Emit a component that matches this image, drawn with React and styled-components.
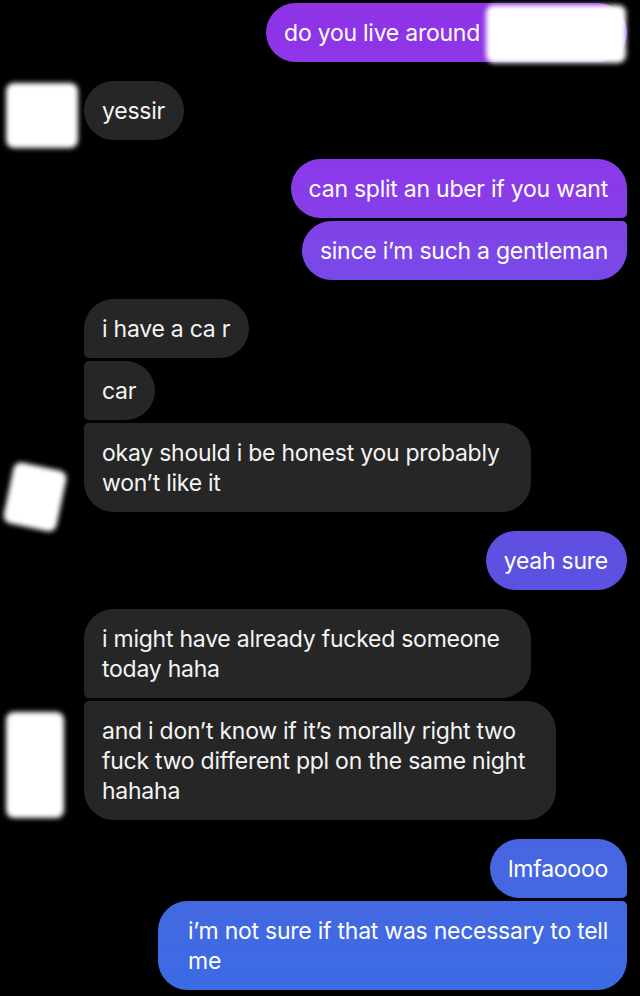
import React from 'react';
import styled, { createGlobalStyle, css } from 'styled-components';

const Global = createGlobalStyle`
  html, body {
    margin: 0;
    background: #000;
  }
  body {
    font-family: Inter, "Noto Sans", "DejaVu Sans", sans-serif;
    -webkit-font-smoothing: antialiased;
  }
`;

const Thread = styled.div`
  display: flex;
  flex-direction: column;
  gap: 19px;
  padding: 3px 13px 0 0;
  min-height: 996px;
  box-sizing: border-box;
  background: #000;
`;

const OutGroup = styled.div`
  display: flex;
  flex-direction: column;
  align-items: flex-end;
  gap: 3px;
`;

const InGroup = styled.div`
  display: flex;
  align-items: flex-end;
`;

const Gutter = styled.div`
  width: 84px;
  flex-shrink: 0;
  display: flex;
  align-items: flex-end;
`;

const InStack = styled.div`
  display: flex;
  flex-direction: column;
  align-items: flex-start;
  gap: 3px;
`;

const BIG = 29.5;
const SMALL = 5;

const cornersFor = (side, pos) => {
  const first = pos === 'first' || pos === 'single';
  const last = pos === 'last' || pos === 'single';
  const top = first ? BIG : SMALL;
  const bottom = last ? BIG : SMALL;
  if (side === 'out') {
    return css`border-radius: ${BIG}px ${top}px ${bottom}px ${BIG}px;`;
  }
  return css`border-radius: ${top}px ${BIG}px ${BIG}px ${bottom}px;`;
};

// wrapped bubbles are a little wider than their longest line
const paddingFor = ({ $side, $multi, $padRight }) => {
  const extra = $multi ? 12 : 0;
  const left = 18 + ($side === 'out' ? extra : 0);
  const right = $padRight || 19 + ($side === 'in' ? extra : 0);
  return css`padding: 14.5px ${right}px 14.5px ${left}px;`;
};

const Bubble = styled.div`
  position: relative;
  box-sizing: border-box;
  max-width: 500px;
  ${paddingFor}
  font-size: 23px;
  line-height: 30px;
  color: #fff;
  letter-spacing: -0.25px;
  white-space: pre-line;
  ${p => cornersFor(p.$side, p.$pos)}
  ${p => p.$side === 'out'
    ? css`
        background: linear-gradient(
          to bottom,
          #8f33e7 0px,
          #8a3be8 190px,
          #7b47e8 250px,
          #5d50e1 560px,
          #4667e1 870px,
          #3b6be3 996px
        );
        background-attachment: fixed;
      `
    : css`
        background: #262626;
        color: #f4f4f4;
      `}
`;

const Smudge = styled.span`
  position: absolute;
  right: ${p => p.$right || 0}px;
  top: ${p => p.$top || 0}px;
  width: ${p => p.$w}px;
  height: ${p => p.$h}px;
  background: #fff;
  border-radius: 8px;
  filter: blur(2.5px);
`;

const Avatar = styled.div`
  width: ${p => p.$w}px;
  height: ${p => p.$h}px;
  margin-left: ${p => p.$left}px;
  margin-bottom: ${p => p.$mb}px;
  background: #fff;
  border-radius: 8px;
  filter: blur(2.5px);
  transform: rotate(${p => p.$rot || 0}deg);
`;

const pos = (i, n) => (n === 1 ? 'single' : i === 0 ? 'first' : i === n - 1 ? 'last' : 'middle');

const Outgoing = ({ lines }) => (
  <OutGroup>
    {lines.map((t, i) => (
      <Bubble key={i} $side="out" $pos={pos(i, lines.length)} $multi={t.includes('\n')}>{t}</Bubble>
    ))}
  </OutGroup>
);

const Incoming = ({ lines, avatar }) => (
  <InGroup>
    <Gutter>
      <Avatar {...avatar} />
    </Gutter>
    <InStack>
      {lines.map((t, i) => (
        <Bubble key={i} $side="in" $pos={pos(i, lines.length)} $multi={t.includes('\n')}>{t}</Bubble>
      ))}
    </InStack>
  </InGroup>
);

export default function App() {
  return (
    <>
      <Global />
      <Thread>
        <OutGroup>
          <Bubble $side="out" $pos="single" $padRight={147}>
            do you live around
            <Smudge $w={140} $h={58} $top={2} $right={1} />
          </Bubble>
        </OutGroup>

        <Incoming
          lines={['yessir']}
          avatar={{ $w: 72, $h: 65, $left: 6, $mb: -8 }}
        />

        <Outgoing lines={['can split an uber if you want', 'since i’m such a gentleman']} />

        <Incoming
          lines={['i have a ca r', 'car', 'okay should i be honest you probably\nwon’t like it']}
          avatar={{ $w: 54, $h: 62, $left: 8, $mb: -16, $rot: 12 }}
        />

        <Outgoing lines={['yeah sure']} />

        <Incoming
          lines={[
            'i might have already fucked someone\ntoday haha',
            'and i don’t know if it’s morally right two\nfuck two different ppl on the same night\nhahaha',
          ]}
          avatar={{ $w: 58, $h: 106, $left: 6, $mb: 2 }}
        />

        <Outgoing lines={['lmfaoooo', 'i’m not sure if that was necessary to tell\nme']} />
      </Thread>
    </>
  );
}
